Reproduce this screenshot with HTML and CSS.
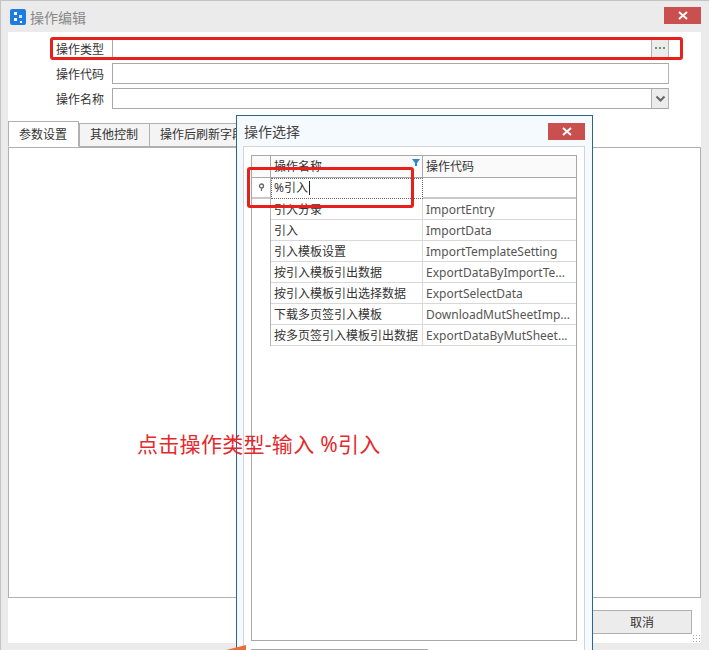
FILE: index.html
```html
<!DOCTYPE html>
<html lang="zh-CN">
<head>
    <meta charset="UTF-8">
    <meta name="viewport" content="width=device-width, initial-scale=1.0">
    <title>操作编辑</title>
    <link rel="stylesheet" href="styles.css">
</head>
<body>
    <div class="window">
        <div class="titlebar">
            <svg class="app-icon" width="16" height="16" viewBox="0 0 16 16">
                <rect width="16" height="16" rx="2" fill="#1e7be0"/>
                <rect x="4" y="3" width="3" height="3" fill="#fff"/>
                <rect x="9" y="6" width="3" height="3" fill="#cfe4fa"/>
                <rect x="4" y="9" width="3" height="3" fill="#fff"/>
                <rect x="10" y="12" width="2" height="2" fill="#fff"/>
            </svg>
            <span class="title">操作编辑</span>
            <button class="close-btn main-close"><svg width="10" height="9" viewBox="0 0 10 9"><path d="M1 1l8 7M9 1l-8 7" stroke="#fff" stroke-width="2"/></svg></button>
        </div>
        <div class="content">
            <form class="fields">
                <div class="field">
                    <label>操作类型</label>
                    <div class="input"><span class="spacer"></span><span class="input-btn"><svg width="11" height="3" viewBox="0 0 11 3"><path d="M0 0h2v2H0zM4 0h2v2H4zM8 0h2v2H8z" fill="#5d9a68"/></svg></span></div>
                </div>
                <div class="field">
                    <label>操作代码</label>
                    <div class="input"></div>
                </div>
                <div class="field">
                    <label>操作名称</label>
                    <div class="input"><span class="spacer"></span><span class="input-btn"><svg width="11" height="8" viewBox="0 0 11 8"><path d="M1.5 1.5l4 4 4-4" fill="none" stroke="#666" stroke-width="2"/></svg></span></div>
                </div>
            </form>
            <div class="tabs">
                <div class="tab active">参数设置</div>
                <div class="tab">其他控制</div>
                <div class="tab">操作后刷新字段</div>
            </div>
            <div class="tab-panel"></div>
            <div class="footer">
                <button class="cancel">取消</button>
            </div>
        </div>
        <div class="grip"></div>
    </div>

    <!-- 操作选择弹窗 -->
    <div class="dialog">
        <div class="dialog-title">
            <span>操作选择</span>
            <button class="close-btn"><svg width="10" height="9" viewBox="0 0 10 9"><path d="M1 1l8 7M9 1l-8 7" stroke="#fff" stroke-width="2"/></svg></button>
        </div>
        <div class="dialog-body">
            <div class="grid">
                <div class="grid-row head">
                    <div class="cell mark"></div>
                    <div class="cell name">操作名称<svg class="filter" width="8" height="8" viewBox="0 0 8 8"><path d="M0 0h8L5 4v3H3V4z" fill="#2c86c8"/></svg></div>
                    <div class="cell">操作代码</div>
                </div>
                <div class="grid-row filter-row">
                    <div class="cell mark"><svg width="7" height="9" viewBox="0 0 7 9"><circle cx="3.5" cy="3" r="2" fill="none" stroke="#666" stroke-width="1.3"/><path d="M3.5 5v3" stroke="#666" stroke-width="1.2"/></svg></div>
                    <div class="cell name editing">%引入<i class="caret"></i></div>
                    <div class="cell"></div>
                </div>
                <div class="grid-row"><div class="cell mark"></div><div class="cell name">引入分录</div><div class="cell code">ImportEntry</div></div>
                <div class="grid-row"><div class="cell mark"></div><div class="cell name">引入</div><div class="cell code">ImportData</div></div>
                <div class="grid-row"><div class="cell mark"></div><div class="cell name">引入模板设置</div><div class="cell code">ImportTemplateSetting</div></div>
                <div class="grid-row"><div class="cell mark"></div><div class="cell name">按引入模板引出数据</div><div class="cell code">ExportDataByImportTe...</div></div>
                <div class="grid-row"><div class="cell mark"></div><div class="cell name">按引入模板引出选择数据</div><div class="cell code">ExportSelectData</div></div>
                <div class="grid-row"><div class="cell mark"></div><div class="cell name">下载多页签引入模板</div><div class="cell code">DownloadMutSheetImp...</div></div>
                <div class="grid-row"><div class="cell mark"></div><div class="cell name">按多页签引入模板引出数据</div><div class="cell code">ExportDataByMutSheet...</div></div>
            </div>
            <div class="pager"></div>
        </div>
    </div>

    <!-- 红色标注 -->
    <div class="note-box box-type"></div>
    <div class="note-box box-filter"></div>
    <div class="note-text">点击操作类型-输入 %引入</div>
    <svg class="arrow-tip" width="24" height="6" viewBox="0 0 24 6"><path d="M0 6L24 0v6z" fill="#e8703a"/></svg>
</body>
</html>
```
FILE: styles.css
```css
* {
    box-sizing: border-box;
}
html, body {
    margin: 0;
    padding: 0;
    height: 650px;
    overflow: hidden;
}
body {
    position: relative;
    font-family: "Noto Sans", "Noto Sans CJK SC", sans-serif;
    font-size: 12px;
    color: #333;
}
.window {
    height: 650px;
    display: flex;
    flex-direction: column;
    background: #ebebeb;
    border-top: 1px solid #c4c4c4;
    border-left: 1px solid #c4c4c4;
    padding: 0 8px 7px 7px;
    position: relative;
}
.titlebar {
    height: 31px;
    flex: none;
    display: flex;
    align-items: center;
    padding-left: 2px;
}
.app-icon {
    margin-right: 4px;
}
.title {
    font-size: 14px;
    color: #888;
}
.close-btn {
    width: 37px;
    height: 17px;
    padding: 0;
    border: none;
    background: #c9504f;
    display: flex;
    align-items: center;
    justify-content: center;
}
.main-close {
    margin-left: auto;
    margin-bottom: 3px;
}
.content {
    flex: 1;
    background: #fff;
    display: flex;
    flex-direction: column;
    min-height: 0;
}
.fields {
    padding: 6px 32px 0 0;
    margin: 0;
    display: flex;
    flex-direction: column;
    gap: 4px;
}
.field {
    display: flex;
    height: 21px;
    align-items: stretch;
}
.field label {
    width: 96px;
    text-align: right;
    margin-right: 8px;
    line-height: 23px;
    color: #333;
}
.input {
    flex: 1;
    display: flex;
    border: 1px solid #a8a8a8;
    border-right-color: #b4b4b4;
    background: #fff;
}
.spacer {
    flex: 1;
}
.input-btn {
    width: 17px;
    background: #ececec;
    border-left: 1px solid #b0b0b0;
    display: flex;
    align-items: center;
    justify-content: center;
}
.tabs {
    display: flex;
    margin-top: 13px;
    height: 25px;
    position: relative;
    z-index: 1;
}
.tab {
    border: 1px solid #b0b0b0;
    background: #f4f4f4;
    height: 24px;
    margin-top: 1px;
    line-height: 22px;
    padding: 0 10px;
    margin-left: -1px;
    white-space: nowrap;
}
.tab:nth-child(2) {
    padding-right: 11px;
}
.tab.active {
    background: #fff;
    border-bottom-color: #fff;
    height: 26px;
    margin-top: -1px;
    line-height: 26px;
    margin-left: 0;
    padding: 0 11px 0 10px;
    margin-right: 1px;
}
.tab-panel {
    flex: none;
    height: 451px;
    border: 1px solid #b0b0b0;
}
.footer {
    flex: 1;
    display: flex;
    justify-content: flex-end;
    align-items: flex-start;
    padding: 12px 9px 0 0;
}
.cancel {
    width: 100px;
    height: 24px;
    border: 1px solid #b0b0b0;
    background: #ececec;
    font: inherit;
    color: #333;
}
.grip {
    position: absolute;
    right: 8px;
    bottom: 8px;
    width: 9px;
    height: 8px;
    background: radial-gradient(circle, #aaa 1px, transparent 1px) 0 0 / 3px 3px;
}

.dialog {
    position: absolute;
    z-index: 2;
    left: 236px;
    top: 115px;
    width: 357px;
    height: 545px;
    background: #f5faff;
    border: 1px solid #2a6594;
    padding: 0 7px 0 6px;
}
.dialog-title {
    height: 30px;
    display: flex;
    align-items: center;
    justify-content: space-between;
    font-size: 14px;
    color: #444;
    padding: 0 0 0 1px;
}
.dialog-body {
    height: 510px;
    background: #fff;
    border: 1px solid #d4d4d4;
    padding: 8px 7px 0 7px;
}
.grid {
    height: 486px;
    border: 1px solid #a8a8a8;
}
.pager {
    margin-top: 8px;
    width: 177px;
    border-top: 1px solid #a8a8a8;
}
.grid-row {
    display: grid;
    grid-template-columns: 19px 152px 1fr;
    height: 21px;
}
.grid-row .cell {
    padding-left: 3px;
    line-height: 22px;
    white-space: nowrap;
    overflow: hidden;
    border-right: 1px solid #d8d8d8;
    border-bottom: 1px solid #d8d8d8;
    position: relative;
}
.grid-row .cell:last-child {
    border-right: none;
}
.grid-row .mark {
    border-right: 1px solid #b4b4b4;
    border-bottom: none;
    display: flex;
    align-items: center;
    justify-content: center;
    padding-left: 0;
}
.grid-row.head {
    height: 22px;
    background: #fafafa;
}
.grid-row.head .cell {
    border-right-color: #a8a8a8;
    border-bottom: 1px solid #a8a8a8;
    line-height: 21px;
}
.grid-row.filter-row .cell {
    border-bottom: 2px solid #c8c8c8;
    line-height: 20px;
}
.grid-row .code {
    color: #555;
}
.filter {
    position: absolute;
    right: 2px;
    top: 3px;
}
.grid-row.filter-row .editing {
    border: 1px dotted #666;
    line-height: 17px;
    padding-left: 2px;
}
.caret {
    display: inline-block;
    width: 1px;
    height: 14px;
    background: #222;
    vertical-align: -3px;
    margin-left: 1px;
}

.note-box {
    position: absolute;
    z-index: 3;
    border: 3px solid #e8201c;
    border-radius: 3px;
}
.box-type {
    left: 50px;
    top: 37px;
    width: 633px;
    height: 23px;
}
.box-filter {
    left: 247px;
    top: 167px;
    width: 167px;
    height: 41px;
}
.note-text {
    position: absolute;
    z-index: 3;
    left: 137px;
    top: 430px;
    font-size: 21px;
    letter-spacing: 0.3px;
    line-height: 28px;
    color: #e5282c;
    white-space: nowrap;
}
.arrow-tip {
    position: absolute;
    z-index: 3;
    left: 222px;
    top: 645px;
}
```
